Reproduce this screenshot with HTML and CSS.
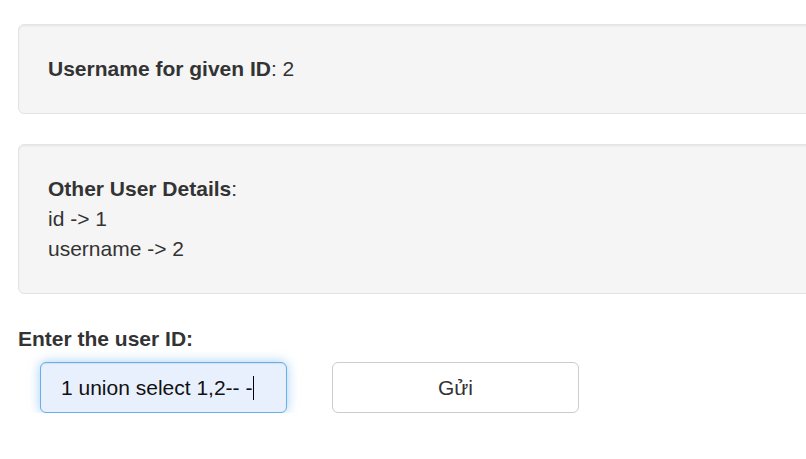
FILE: index.html
```html
<!DOCTYPE html>
<html lang="en">
<head>
<meta charset="utf-8">
<title>User lookup</title>
<link rel="stylesheet" href="styles.css">
</head>
<body>
<div class="page">
  <div class="well">
    <b>Username for given ID</b>: 2
  </div>
  <div class="well">
    <b>Other User Details</b>:<br>
    id -&gt; 1<br>
    username -&gt; 2
  </div>
  <form class="lookup">
    <label class="label">Enter the user ID:</label>
    <div class="controls">
      <div class="input" role="textbox"><span>1 union select 1,2-- -</span><span class="caret"></span></div>
      <button type="button" class="btn">Gửi</button>
    </div>
  </form>
</div>
</body>
</html>
```
FILE: styles.css
```css
html, body {
  margin: 0;
  padding: 0;
  background: #fff;
  overflow: hidden;
}
body {
  font-family: "Liberation Sans", Arial, Helvetica, sans-serif;
  font-size: 21px;
  line-height: 30px;
  color: #333;
}
.page {
  width: 840px;
  padding: 24px 0 0 18px;
}
.well {
  background: #f5f5f5;
  border: 1px solid #e3e3e3;
  border-radius: 6px;
  box-shadow: inset 0 1.5px 1.5px rgba(0, 0, 0, 0.05);
  padding: 29px;
  margin-bottom: 30px;
}
.well b {
  font-weight: bold;
}
.lookup {
  margin: 0;
}
.label {
  display: block;
  font-weight: bold;
  margin-bottom: 8px;
}
.controls {
  display: flex;
  align-items: center;
  gap: 45px;
  padding-left: 22px;
}
.input {
  box-sizing: border-box;
  width: 247px;
  height: 51px;
  display: flex;
  align-items: center;
  padding: 0 20px;
  background: #e8f0fe;
  border: 1px solid #66afe9;
  border-radius: 6px;
  box-shadow: inset 0 1px 1px rgba(0, 0, 0, 0.075), 0 0 12px rgba(102, 175, 233, 0.6);
  color: #111;
  white-space: nowrap;
}
.caret {
  display: inline-block;
  width: 1px;
  height: 24px;
  background: #000;
  margin-left: 1px;
}
.btn {
  box-sizing: border-box;
  width: 247px;
  height: 51px;
  background: #fff;
  border: 1px solid #ccc;
  border-radius: 6px;
  font-family: inherit;
  font-size: 21px;
  color: #333;
  padding: 0;
}
```
